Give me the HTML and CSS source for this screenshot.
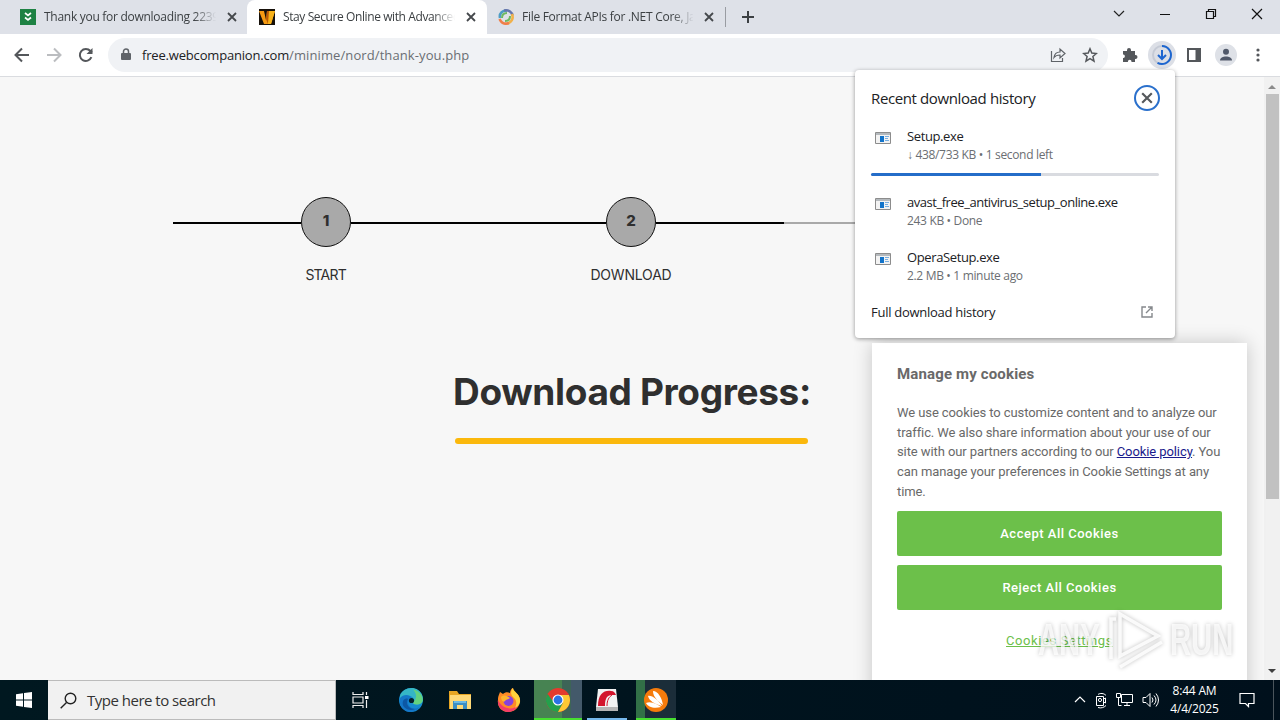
FILE: index.html
```html
<!doctype html>
<html lang="en">
<head>
	<meta charset="utf-8">
	<title>Stay Secure Online with Advanced Protection</title>
	<link rel="stylesheet" href="styles.css">
</head>
<body>
	<svg class="defs" width="0" height="0">
		<symbol id="x" viewBox="0 0 10 10"><path d="M1 1l8 8M9 1L1 9" fill="none" stroke="currentColor" stroke-width="1.8"/></symbol>
		<symbol id="exe" viewBox="0 0 16 12"><path d="M.5.5h15v11H.5z" fill="#f3f3f3" stroke="#8c8c8c"/><path d="M1 1h14v2H1z" fill="#b4b9bd"/><path d="M5 4h4v6H5z" fill="#1273c9"/><path d="M10 4.5h4M10 6.5h3M10 8.5h4" stroke="#78aee0"/></symbol>
	</svg>

	<div class="tabs">
		<div class="tab">
			<svg width="16" height="16"><path d="M0 0h16v16H0z" fill="#1e8244"/><path d="M5 4l3 2.5L11 4M5 8.500l3 2.500 3-2.500" fill="none" stroke="#fff" stroke-width="1.700"/></svg>
			<span class="title">Thank you for downloading 2239</span>
			<svg class="x" width="10" height="10"><use href="#x"/></svg>
		</div>
		<div class="tab active">
			<svg width="16" height="16"><path d="M0 0h16v16H0z" fill="#17110a"/><path d="M0 2h5l2 9 1-9h8l-4 13H5z" fill="#f59a13"/><path d="M8 2l-1 8 2 5 3-13z" fill="#b95a06"/><path d="M10 2h6l-4 13H9z" fill="#f7b21a"/></svg>
			<span class="title">Stay Secure Online with Advanced</span>
			<svg class="x" width="10" height="10"><use href="#x"/></svg>
		</div>
		<div class="tab">
			<svg width="16" height="16" viewBox="0 0 16 16" fill="none" stroke-width="2.600"><path d="M2 9C1 4 5 1 9 2" stroke="#4d9dc5"/><path d="M6 1.500c5-1 8 2 8.500 5" stroke="#6677ad"/><path d="M14 5c2 5-1 9-5 9.500" stroke="#f1b14a"/><path d="M11 14c-5 2-8-1-9.500-4" stroke="#ef7f49"/><path d="M4 9c0-4 2-5 5-5M12 7c0 4-2 5-5 5" stroke="#6eb960" stroke-width="2"/></svg>
			<span class="title">File Format APIs for .NET Core, Java</span>
			<svg class="x" width="10" height="10"><use href="#x"/></svg>
		</div>
		<svg class="plus" width="12" height="12"><path d="M6 0v12M0 6h12" stroke="#3c4043" stroke-width="2"/></svg>
		<div class="window-buttons">
			<svg width="12" height="12"><path d="M1 3l5 5 5-5" fill="none" stroke="#222" stroke-width="1.200"/></svg>
			<svg width="12" height="12"><path d="M1 6.500h10" stroke="#111"/></svg>
			<svg width="12" height="12"><path d="M1.500 3.500h7v7h-7zM3.500 3.500v-2h7v7h-2" fill="none" stroke="#111" stroke-width="1.200"/></svg>
			<svg width="12" height="12"><path d="M1 1l10 10M11 1L1 11" stroke="#111" stroke-width="1.200"/></svg>
		</div>
	</div>

	<div class="toolbar">
		<div class="nav">
			<svg width="16" height="16" fill="none" stroke="#54575b" stroke-width="2"><path d="M15 8H2M8 1.500L1.500 8 8 14.500"/></svg>
			<svg width="16" height="16" fill="none" stroke="#bbbdc0" stroke-width="2"><path d="M1 8h13M8 1.500L14.500 8 8 14.500"/></svg>
			<svg width="16" height="16" fill="none" stroke="#54575b" stroke-width="2"><path d="M13.400 10.200a6 6 0 1 1-1-6.200L14 5.500"/><path d="M14.500 1v6h-6z" fill="#54575b" stroke="none"/></svg>
		</div>
		<div class="omnibox">
			<svg width="10" height="14"><path d="M1 5h8q1 0 1 1v5q0 1-1 1H1q-1 0-1-1V6q0-1 1-1z" fill="#5f6368"/><path d="M2.500 6V3.500a2.500 2.500 0 0 1 5 0V6" fill="none" stroke="#5f6368" stroke-width="1.500"/></svg>
			<span class="url"><b>free.webcompanion.com</b>/minime/nord/thank-you.php</span>
			<svg width="16" height="16" fill="none" stroke="#5f6368" stroke-width="1.200"><path d="M1.500 4v10.500h11V11"/><path d="M4 10.500c.5-4 2.500-5.500 6-5.500V2l5 4.500-5 4.500V8c-3 0-4.500.5-6 2.500z"/></svg>
			<svg class="star" width="16" height="16"><path d="M8 1.800l1.800 4.300 4.600.4-3.500 3 1.100 4.600L8 11.700l-4 2.400 1.100-4.600-3.500-3 4.600-.4z" fill="none" stroke="#54575b" stroke-width="1.500"/></svg>
		</div>
		<div class="actions">
			<div><svg width="16" height="16"><path d="M1 4h4V3a2 2 0 0 1 4 0v1h4v4h.500a2 2 0 0 1 0 4H13v3H9.500v-.5a1.800 1.800 0 0 0-3.600 0v.5H1v-4h.5a1.800 1.800 0 0 0 0-3.500H1z" fill="#54575b"/></svg></div>
			<div><svg width="28" height="28"><circle cx="14" cy="14" r="14" fill="#dcdfe6"/><circle cx="14" cy="14" r="9" fill="none" stroke="#c5cad5" stroke-width="2"/><path d="M14 5a9 9 0 1 1-4.500 16.800" fill="none" stroke="#1d66d0" stroke-width="2"/><path d="M14 9v9M10 14l4 4 4-4" fill="none" stroke="#1d66d0" stroke-width="2"/></svg></div>
			<div><svg width="14" height="14"><path d="M1 1h12v12H1z" fill="none" stroke="#54575b" stroke-width="2"/><path d="M8.500 1H13v12H8.500z" fill="#54575b"/></svg></div>
			<div><svg width="22" height="22"><circle cx="11" cy="11" r="11" fill="#dee1e7"/><circle cx="11" cy="7.800" r="3" fill="#51596a"/><path d="M5 16.500c0-5.300 12-5.300 12 0z" fill="#51596a"/></svg></div>
			<div><svg width="4" height="16" fill="#54575b"><circle cx="2" cy="3" r="1.600"/><circle cx="2" cy="8" r="1.600"/><circle cx="2" cy="13" r="1.600"/></svg></div>
		</div>
	</div>

	<div class="viewport">
		<div class="page">
			<div class="steps">
				<div class="step start-step"><div class="track"><i></i><b>1</b><i></i></div><span>START</span></div>
				<div class="step"><div class="track"><i></i><b>2</b><i></i></div><span>DOWNLOAD</span></div>
				<div class="step todo"><div class="track"><i></i></div></div>
			</div>
			<h1>Download Progress:</h1>
			<div class="progress"></div>
		</div>
		<div class="scrollbar">
			<svg width="8" height="4"><path d="M0 4l4-4 4 4z" fill="#8b8b8b"/></svg>
			<div class="thumb"></div>
			<svg width="8" height="4"><path d="M0 0h8L4 4z" fill="#404040"/></svg>
		</div>

		<div class="cookies">
			<h2>Manage my cookies</h2>
			<p>
				We use cookies to customize content and to analyze our<br>
				traffic. We also share information about your use of our<br>
				site with our partners according to our <a>Cookie policy</a>. You<br>
				can manage your preferences in Cookie Settings at any<br>
				time.
			</p>
			<button>Accept All Cookies</button>
			<button>Reject All Cookies</button>
			<div class="settings">Cookies Settings</div>
		</div>
	</div>

	<div class="downloads">
		<div class="head"><span>Recent download history</span><div class="close"><svg width="12" height="12"><use href="#x"/></svg></div></div>
		<div class="item">
			<svg width="16" height="12"><use href="#exe"/></svg>
			<div><div class="name">Setup.exe</div><div class="info">↓ 438/733 KB • 1 second left</div></div>
		</div>
		<div class="bar"><div></div></div>
		<div class="item">
			<svg width="16" height="12"><use href="#exe"/></svg>
			<div><div class="name long">avast_free_antivirus_setup_online.exe</div><div class="info">243 KB • Done</div></div>
		</div>
		<div class="item">
			<svg width="16" height="12"><use href="#exe"/></svg>
			<div><div class="name">OperaSetup.exe</div><div class="info">2.2 MB • 1 minute ago</div></div>
		</div>
		<div class="full"><span>Full download history</span><svg width="12" height="12" fill="none" stroke="#85888c" stroke-width="1.400"><path d="M5 1H1v10h10V7M7 1h4v4M11 1L5 7"/></svg></div>
	</div>

	<div class="watermark">
		<span>ANY</span>
		<svg width="60" height="64" viewBox="0 0 60 64" fill="none" stroke="#fff" stroke-opacity=".85" stroke-width="3.500"><path d="M14 6v42l38-20z"/><path d="M10 11H5v40M14 59l42-25"/></svg>
		<span>RUN</span>
	</div>

	<div class="taskbar">
		<div class="start"><svg width="16" height="16" fill="#fff"><path d="M0 2.300l7-1v6.200H0zM8 1.100L16 0v7.500H8zM0 8.500h7v6.200l-7-1zM8 8.500h8V16l-8-1.100z"/></svg></div>
		<div class="search">
			<svg width="17" height="17" fill="none" stroke="#222" stroke-width="1.400"><circle cx="10.500" cy="6.500" r="5.300"/><path d="M6.500 10.500L.7 16.300"/></svg>
			<span>Type here to search</span>
		</div>
		<div class="app taskview"><svg width="17" height="16" fill="none" stroke="#eee" stroke-width="1.200"><path d="M1 0v2.500h10V0M1 5h10v6H1zM1 16v-2.500h10V16M14.500 0v3M14.500 8v8"/><path d="M13 4h3.500v3H13z" fill="#fff" stroke="none"/></svg></div>
		<div class="app"><svg width="24" height="24" viewBox="0 0 24 24"><circle cx="12" cy="12" r="12" fill="#168bd0"/><path d="M1 8C4-2 20-3 23.500 8c1.500 6-2 8.500-6 8.500-3 0-4-1-3-2.500 1-5-3-7-7-6-3 0-5 1-6.500 4z" fill="#35b6c6"/><path d="M14 1.500c6 1 10 6 9.800 11-.5 3-3.300 4.200-6.300 4-3 0-4-1-3-2.500 3-3 4-8-.5-12.500z" fill="#63d27f"/><path d="M1 10c3-4 10-4 11 0-4 1-4 8 1 10 3 1 6 0 8-1-4 5-12 7-17 2C1 18 0 14 1 10z" fill="#1477c8"/><path d="M9 11c-3 5 1 10 7 10-7 3-14-2-12-8 1-2 3-3 5-2z" fill="#0c58a4"/><circle cx="12.500" cy="12.500" r="2.600" fill="#04202d"/></svg></div>
		<div class="app"><svg width="22" height="20" viewBox="0 0 22 20"><path d="M0 1h8l2 3h12v15H0z" fill="#e7a623"/><path d="M1 5h21v14H1z" fill="#ffd977"/><path d="M4 19v-8h14v8h-4v-4H8v4z" fill="#3d8ec3"/><path d="M5 11h12v2H5z" fill="#6cb9e5"/></svg></div>
		<div class="app"><svg width="24" height="24" viewBox="0 0 24 24"><path d="M3 4l3 2c2-2 5-2 7-1 0-3 2-5 3-5 0 4 8 6 7 14-1 6-6 10-12 10S0 19 1 12c0-4 1-5 2-8z" fill="#ff8a26"/><path d="M1 12c4 9 15 11 20 5-2 5-6 7-10 7C5 24 0 18 1 12z" fill="#f43c69"/><path d="M16 0c0 4 8 6 7 14-1 3-3 5-5 6 2-4 2-8-2-11-3-3-2-7 0-9z" fill="#ffd23d"/><circle cx="11.500" cy="13" r="5" fill="#8741dc"/><path d="M4 9c3-3 6-1 9 1-2 2-4 1-5 3-2 2-4-1-4-4z" fill="#ffb42f"/></svg></div>
		<div class="app chrome"><svg width="24" height="24" viewBox="0 0 24 24"><circle cx="12" cy="12" r="12" fill="#e33b2e"/><path d="M1.600 6A12 12 0 0 0 12 24l5-9-5-3H6z" fill="#24a04c"/><path d="M12 7h10.900A12 12 0 0 1 12 24l5-9z" fill="#fcc934"/><circle cx="12" cy="12" r="5.500" fill="#fff"/><circle cx="12" cy="12" r="4.400" fill="#2a73e5"/></svg></div>
		<div class="app opera"><svg width="22" height="24" viewBox="0 0 22 24"><path d="M2 1h18l2 18v4H0v-4z" fill="#f2f2f2"/><path d="M0 19h22v4H0z" fill="#b5b5b5"/><path d="M2 18C2 6 8 2 15 3c3 0 4 2 5 4h-5c-5 1-6 5-6 11z" fill="#d3152c"/><path d="M11 18c0-6 2-9 5-11" fill="none" stroke="#d3152c"/></svg></div>
		<div class="app avast"><svg width="24" height="24" viewBox="0 0 24 24"><circle cx="12" cy="12" r="12" fill="#f57b0b"/><path d="M9 3c5 0 9 7 10 14-5-4-10-8-10-14zM4 8c4-1 10 4 14 10C11 16 5 13 4 8zM2 15c5-2 11 1 15 4-7 2-13 0-15-4z" fill="#fff"/></svg></div>

		<div class="tray">
			<svg width="12" height="12"><path d="M1 8l5-5 5 5" fill="none" stroke="#fff" stroke-width="1.200"/></svg>
			<svg width="12" height="18" fill="none" stroke="#fff"><path d="M1.500 5.500h7v9h-7zM3 3.500c2-1.500 6-1.500 8 1M3 16.500c3 1 6 0 8-2"/><circle cx="5" cy="9" r="1.600"/><path d="M8.500 8l2-1v5l-2-1"/></svg>
			<svg width="17" height="16" fill="none" stroke="#fff"><path d="M5.500 2.500h11v8h-11zM8 13.500h6M11 10.500v3M.5 1.500h4v4h-4zM2.500 5.500v8h3"/></svg>
			<svg width="17" height="16" fill="none" stroke="#fff"><path d="M1 5.500h3l4-4v13l-4-4H1zM10 5.500q2 2.500 0 5M12 3.500q4 4.500 0 9M14 1.500q5 6.500 0 13"/></svg>
		</div>
		<div class="clock"><span>8:44 AM</span><span>4/4/2025</span></div>
		<div class="note"><svg width="16" height="16" fill="none" stroke="#fff" stroke-width="1.200"><path d="M1 1.500h14v10H9.500v3l-3-3H1z"/></svg></div>
	</div>
</body>
</html>
```
FILE: styles.css
```css
* {
	box-sizing: border-box;
}

body {
	margin: 0;
	width: 1280px;
	height: 720px;
	overflow: hidden;
	display: flex;
	flex-direction: column;
	position: relative;
	background: #f7f7f7;
	font: 12px/16px "Open Sans", "Noto Sans", sans-serif;
	color: #202124;
}

svg {
	display: block;
	flex: none;
}

.defs {
	position: absolute;
}

/* browser frame */
.tabs {
	height: 34px;
	flex: none;
	display: flex;
	align-items: center;
	background: #dee1e8;
}

.tab {
	width: 240px;
	height: 34px;
	display: flex;
	align-items: center;
	padding: 0 11px 0 12px;
	color: #3c4043;
}

.tab:first-child {
	width: 247px;
	padding: 0 10px 0 20px;
}

.tab:nth-child(3) {
	width: 239px;
	padding-left: 11px;
	border-right: 1px solid #999ca2;
	height: 20px;
}

.active {
	background: #fff;
	border-radius: 8px 8px 0 0;
}

.title {
	width: 172px;
	margin: 0 11px 0 8px;
	letter-spacing: -.28px;
	white-space: nowrap;
	overflow: hidden;
	-webkit-mask-image: linear-gradient(to right, #000 150px, transparent 172px);
	mask-image: linear-gradient(to right, #000 150px, transparent 172px);
}

.active .title {
	letter-spacing: -.4px;
}

.tab .x {
	color: #45484c;
}

.plus {
	margin-left: 16px;
}

.window-buttons {
	display: flex;
	gap: 34px;
	margin-left: auto;
	margin-bottom: 6px;
	padding-right: 17px;
}

.toolbar {
	height: 43px;
	flex: none;
	display: flex;
	align-items: center;
	background: #fff;
	border-bottom: 1px solid #dadce0;
}

.nav {
	width: 108px;
	display: flex;
	gap: 16px;
	padding-left: 14px;
}

.omnibox {
	width: 1000px;
	height: 34px;
	display: flex;
	align-items: center;
	gap: 11px;
	padding: 0 10px 0 13px;
	border-radius: 17px;
	background: #f0f2f5;
}

.url {
	flex: 1;
	font-size: 13px;
	letter-spacing: .1px;
	color: #6a6e73;
}

.url b {
	font-weight: normal;
	letter-spacing: -.18px;
	color: #202124;
}

.star {
	margin-left: 5px;
}

.actions {
	display: flex;
	padding-left: 6px;
}

.actions div {
	width: 32px;
	height: 28px;
	display: flex;
	align-items: center;
	justify-content: center;
}

/* page */
.viewport {
	height: 603px;
	flex: none;
	display: flex;
	position: relative;
	overflow: hidden;
}

.page {
	width: 1264px;
	display: flex;
	flex-direction: column;
	align-items: center;
	padding-top: 120px;
	font-family: Inter, "Open Sans", sans-serif;
	color: #2f2f2f;
}

.steps {
	display: flex;
	width: 916px;
	margin-right: 2px;
}

.step {
	flex: 1;
	display: flex;
	flex-direction: column;
	align-items: center;
	gap: 18px;
	font-size: 14px;
	line-height: 20px;
	letter-spacing: -.2px;
}

.start-step {
	letter-spacing: -.8px;
}

.track {
	width: 100%;
	height: 50px;
	display: flex;
	align-items: center;
}

.track i {
	flex: 1;
	height: 2px;
	margin-top: 1px;
	background: #000;
}

.track b {
	width: 50px;
	height: 50px;
	border: 1px solid #111;
	border-radius: 50%;
	background: #a9a9a9;
	text-align: center;
	font-size: 15px;
	font-weight: 800;
	line-height: 46px;
}

.todo i {
	background: #a9a9a9;
}

h1 {
	margin: 83px 0 0;
	font-size: 37px;
	line-height: 48px;
	font-weight: 700;
	letter-spacing: -.35px;
	white-space: nowrap;
}

.progress {
	width: 353px;
	height: 6px;
	margin: 22px 1px 0 0;
	border-radius: 3px;
	background: #fbb80c;
}

.scrollbar {
	width: 16px;
	display: flex;
	flex-direction: column;
	align-items: center;
	padding: 8px 0 7px;
	background: #f1f1f1;
}

.thumb {
	width: 13px;
	height: 405px;
	margin: 5px 0 auto;
	background: #c1c1c1;
}

.cookies {
	position: absolute;
	left: 872px;
	top: 266px;
	width: 375px;
	height: 360px;
	padding: 20px 25px;
	display: flex;
	flex-direction: column;
	background: #fff;
	box-shadow: 0 0 18px rgba(0, 0, 0, .2);
	font-family: Roboto, sans-serif;
	color: #696969;
}

.cookies h2 {
	margin: 0;
	font-size: 15px;
	line-height: 22px;
	letter-spacing: .15px;
	font-weight: 700;
}

.cookies p {
	margin: 18px 0 9px;
	font-size: 13px;
	line-height: 19.7px;
	letter-spacing: -.09px;
	white-space: nowrap;
}

.cookies a {
	color: #1a1a8c;
	text-decoration: underline;
}

.cookies button {
	height: 45px;
	flex: none;
	margin: 0 0 9px;
	padding: 0;
	border: 0;
	border-radius: 2px;
	background: #6cc04a;
	color: #fff;
	font: 500 13px Roboto, sans-serif;
	letter-spacing: .5px;
}

.settings {
	margin-top: 12px;
	text-align: center;
	font-size: 13px;
	line-height: 20px;
	letter-spacing: .6px;
	color: #6cc04a;
	text-decoration: underline;
}

/* download bubble */
.downloads {
	position: absolute;
	left: 855px;
	top: 70px;
	width: 320px;
	height: 268px;
	padding: 15px 16px 0;
	border-radius: 4px;
	background: #fff;
	box-shadow: 0 1px 4px rgba(0, 0, 0, .4);
}

.head {
	display: flex;
	justify-content: space-between;
	align-items: center;
	height: 26px;
	margin-right: -1px;
	font-size: 15px;
	letter-spacing: -.38px;
}

.close {
	width: 26px;
	height: 26px;
	border: 2px solid #2a70cc;
	border-radius: 50%;
	display: flex;
	align-items: center;
	justify-content: center;
	color: #55585c;
}

.item {
	display: flex;
	height: 37px;
	margin-top: 18px;
	padding-left: 4px;
	gap: 16px;
}

.head + .item {
	height: 38px;
	margin-top: 16px;
}

.item svg {
	margin-top: 5px;
}

.name {
	line-height: 18px;
	font-size: 13px;
	letter-spacing: -.38px;
}

.long {
	letter-spacing: -.46px;
}

.info {
	line-height: 19px;
	font-size: 12px;
	letter-spacing: -.33px;
	color: #6b6e72;
}

.bar {
	height: 3px;
	margin-top: 8px;
	border-radius: 2px;
	background: #d9dbe0;
}

.bar div {
	width: 170px;
	height: 3px;
	border-radius: 2px 0 0 2px;
	background: #246dc9;
}

.bar + .item {
	margin-top: 17px;
}

.full {
	display: flex;
	justify-content: space-between;
	align-items: center;
	height: 20px;
	margin-top: 17px;
	padding-right: 6px;
	font-size: 13px;
	letter-spacing: -.27px;
}

.watermark {
	position: absolute;
	left: 1038px;
	top: 608px;
	display: flex;
	align-items: center;
	gap: 4px;
	font: bold 45px/64px "Liberation Sans", sans-serif;
	color: rgba(255, 255, 255, .75);
	filter: drop-shadow(0 0 2px rgba(0, 0, 0, .3));
}

.watermark span {
	width: 64px;
	white-space: nowrap;
	transform: scaleX(.65);
	transform-origin: left;
}

/* taskbar */
.taskbar {
	height: 40px;
	flex: none;
	display: flex;
	background: linear-gradient(to right, #001820, #00101c);
}

.start, .app {
	width: 49px;
	display: flex;
	align-items: center;
	justify-content: center;
}

.start {
	width: 48px;
}

.search {
	width: 288px;
	display: flex;
	align-items: center;
	gap: 10px;
	padding-left: 12px;
	border: 1px solid #bbb;
	border-left: 0;
	background: #f1f1f1;
	font-size: 15px;
	letter-spacing: -.5px;
	color: #333;
}

.taskview {
	width: 50px;
	padding-right: 2px;
}

.chrome {
	width: 48px;
	margin-left: 1px;
	padding-top: 2px;
	background: linear-gradient(to right, #478352 0 28px, #3d6457 28px 37px, #43596a 37px);
	border-bottom: 2px solid #47df30;
}

.opera {
	width: 40px;
	margin: 0 9px 0 5px;
	padding-top: 2px;
	border-bottom: 2px solid #76b9ed;
}

.avast {
	width: 40px;
	padding-top: 2px;
	background: linear-gradient(to right, #327047 0 9px, #1b2d39 9px);
	border-bottom: 2px solid #47df30;
}

.tray {
	display: flex;
	align-items: center;
	gap: 9px;
	margin: 0 1px 0 auto;
}

.clock {
	width: 69px;
	display: flex;
	flex-direction: column;
	align-items: center;
	padding-top: 2px;
	line-height: 18px;
	letter-spacing: -.2px;
	color: #fff;
}

.note {
	width: 51px;
	display: flex;
	align-items: center;
	padding-left: 10px;
}

.note::after {
	content: "";
	height: 40px;
	margin-left: 18px;
	border-left: 1px solid #4a555c;
}
```
